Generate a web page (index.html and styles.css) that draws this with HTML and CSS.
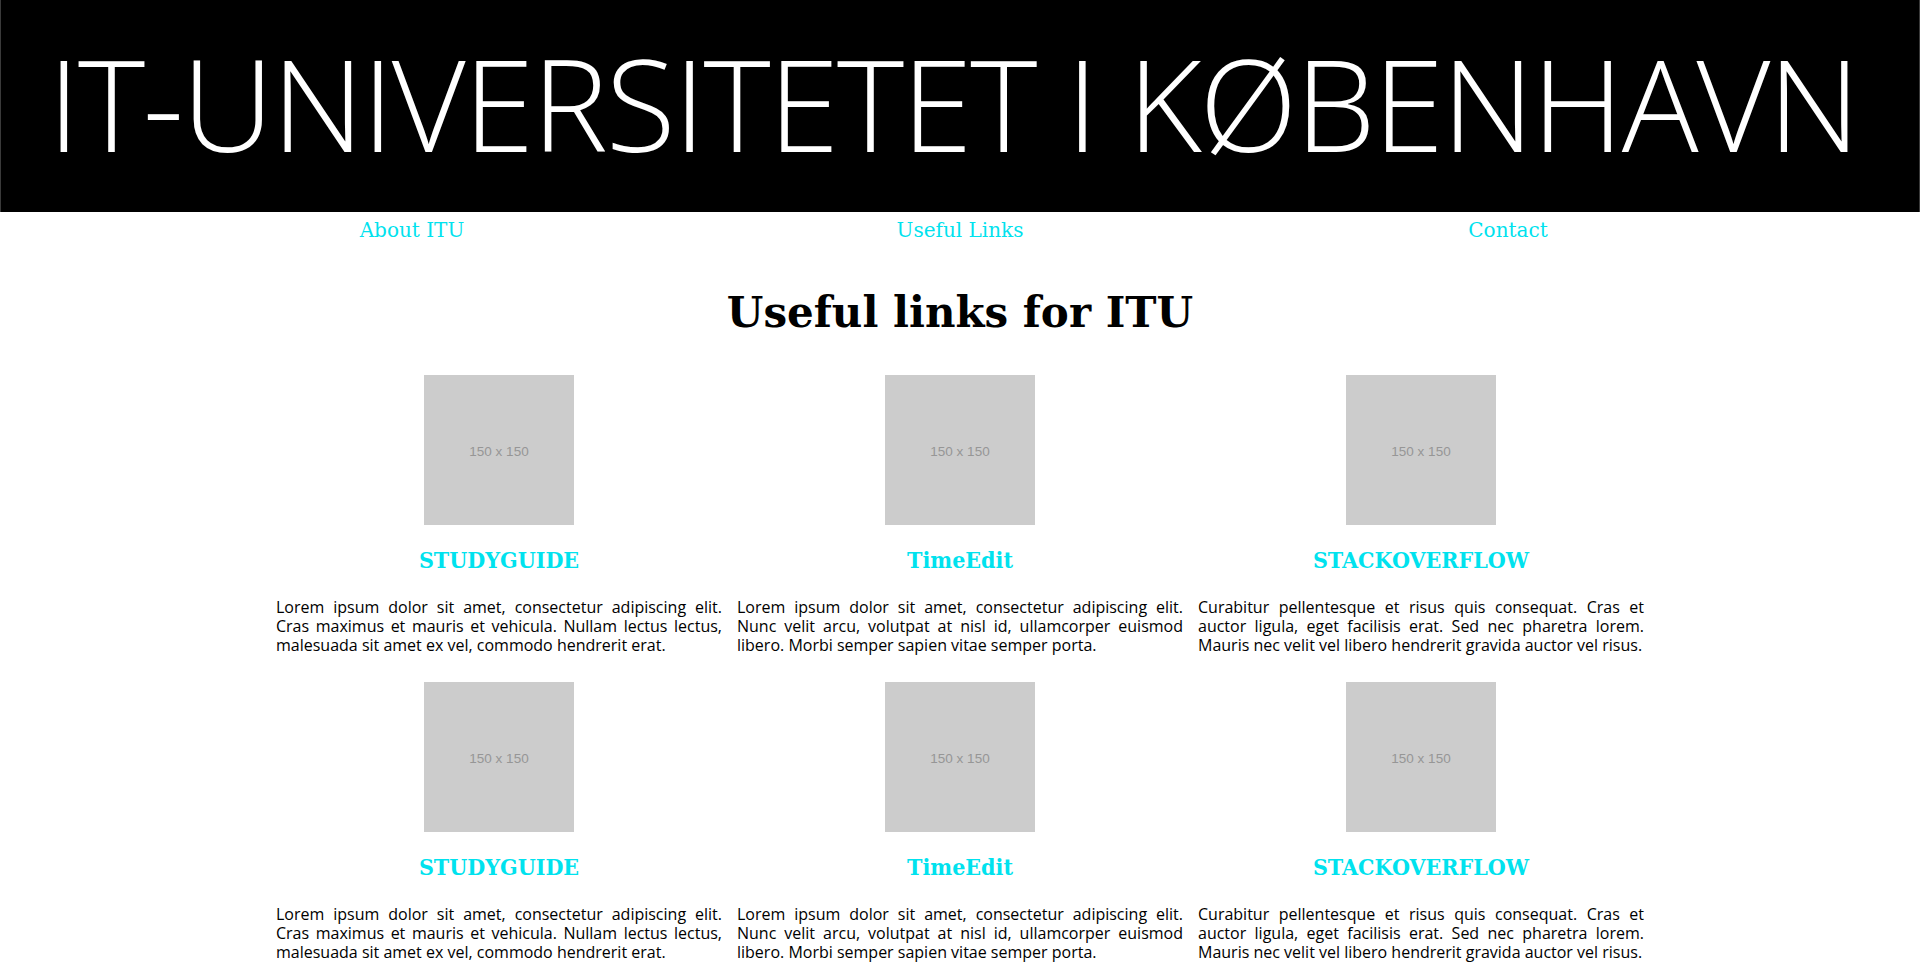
FILE: index.html
```html
<!DOCTYPE html>
<html lang="da">
<head>
<meta charset="utf-8">
<title>IT-Universitetet i København</title>
<link rel="stylesheet" href="styles.css">
</head>
<body>
<header class="banner">
  <h1 class="banner-title">IT-UNIVERSITETET I KØBENHAVN</h1>
</header>
<nav class="topnav">
  <a class="topnav-link" href="#">About ITU</a>
  <a class="topnav-link" href="#">Useful Links</a>
  <a class="topnav-link" href="#">Contact</a>
</nav>
<main class="content">
  <h2 class="page-title">Useful links for ITU</h2>
  <section class="cards">
    <article class="card">
      <div class="thumb">150 x 150</div>
      <h3 class="card-title">STUDYGUIDE</h3>
      <p class="card-text">Lorem ipsum dolor sit amet, consectetur adipiscing elit. Cras maximus et mauris et vehicula. Nullam lectus lectus, malesuada sit amet ex vel, commodo hendrerit erat.</p>
    </article>
    <article class="card">
      <div class="thumb">150 x 150</div>
      <h3 class="card-title">TimeEdit</h3>
      <p class="card-text">Lorem ipsum dolor sit amet, consectetur adipiscing elit. Nunc velit arcu, volutpat at nisl id, ullamcorper euismod libero. Morbi semper sapien vitae semper porta.</p>
    </article>
    <article class="card">
      <div class="thumb">150 x 150</div>
      <h3 class="card-title">STACKOVERFLOW</h3>
      <p class="card-text">Curabitur pellentesque et risus quis consequat. Cras et auctor ligula, eget facilisis erat. Sed nec pharetra lorem. Mauris nec velit vel libero hendrerit gravida auctor vel risus.</p>
    </article>
    <article class="card">
      <div class="thumb">150 x 150</div>
      <h3 class="card-title">STUDYGUIDE</h3>
      <p class="card-text">Lorem ipsum dolor sit amet, consectetur adipiscing elit. Cras maximus et mauris et vehicula. Nullam lectus lectus, malesuada sit amet ex vel, commodo hendrerit erat.</p>
    </article>
    <article class="card">
      <div class="thumb">150 x 150</div>
      <h3 class="card-title">TimeEdit</h3>
      <p class="card-text">Lorem ipsum dolor sit amet, consectetur adipiscing elit. Nunc velit arcu, volutpat at nisl id, ullamcorper euismod libero. Morbi semper sapien vitae semper porta.</p>
    </article>
    <article class="card">
      <div class="thumb">150 x 150</div>
      <h3 class="card-title">STACKOVERFLOW</h3>
      <p class="card-text">Curabitur pellentesque et risus quis consequat. Cras et auctor ligula, eget facilisis erat. Sed nec pharetra lorem. Mauris nec velit vel libero hendrerit gravida auctor vel risus.</p>
    </article>
  </section>
</main>
</body>
</html>
```

FILE: styles.css
```css
* { box-sizing: border-box; }

body {
  margin: 0;
  background: #ffffff;
  font-family: "Open Sans", "Liberation Sans", sans-serif;
  color: #000;
}

.banner {
  height: 212px;
  padding: 0 14px 6px 0;
  background: #000;
  border-left: 1px solid #3a3a3a;
  border-right: 1px solid #3a3a3a;
  display: flex;
  align-items: center;
  justify-content: center;
}

.banner-title {
  margin: 0;
  font-family: "Open Sans", sans-serif;
  font-weight: 300;
  font-size: 128px;
  line-height: 128px;
  color: #fff;
  white-space: nowrap;
  letter-spacing: -2.2px;
}

.topnav {
  width: 1644px;
  margin: 0 auto;
  padding-top: 3px;
  display: flex;
}

.topnav-link {
  flex: 1;
  text-align: center;
  font-family: "DejaVu Serif", serif;
  font-size: 20px;
  line-height: 30px;
  color: #00e2ee;
  text-decoration: none;
}

.content {
  width: 1368px;
  margin: 0 auto;
}

.page-title {
  margin: 43px 0 37px;
  text-align: center;
  font-family: "DejaVu Serif", serif;
  font-weight: bold;
  font-size: 42px;
  line-height: 50px;
}

.cards {
  display: grid;
  grid-template-columns: repeat(3, 1fr);
  column-gap: 15px;
  row-gap: 27px;
}

.card {
  display: flex;
  flex-direction: column;
  align-items: center;
}

.thumb {
  width: 150px;
  height: 150px;
  padding-top: 3px;
  background: #cccccc;
  color: #969696;
  font-family: "Liberation Sans", Arial, sans-serif;
  font-size: 13.5px;
  display: flex;
  align-items: center;
  justify-content: center;
}

.card-title {
  margin: 21px 0 0;
  font-family: "DejaVu Serif Condensed", "DejaVu Serif", serif;
  font-weight: bold;
  font-size: 23px;
  line-height: 28px;
  color: #00e2ee;
}

.card-text {
  margin: 24px 0 0;
  align-self: stretch;
  text-align: justify;
  font-size: 16px;
  line-height: 19px;
}
```
